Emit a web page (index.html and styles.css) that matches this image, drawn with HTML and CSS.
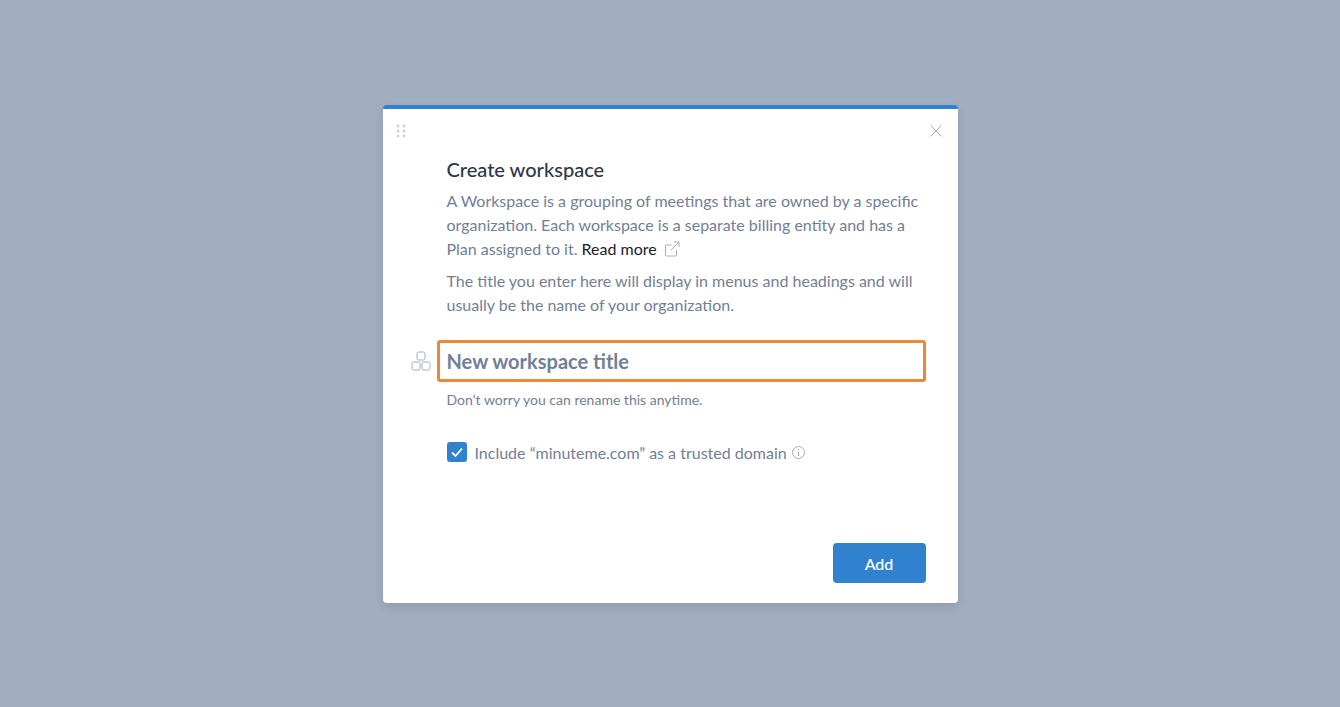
FILE: index.html
```html
<!DOCTYPE html>
<html lang="en">
<head>
<meta charset="utf-8">
<title>Create workspace</title>
<link rel="stylesheet" href="styles.css">
</head>
<body>
<div class="dialog">
  <div class="topbar">
    <svg class="grip" width="10" height="14" viewBox="0 0 10 14"><g fill="#cbd5e0"><circle cx="2" cy="2" r="1.5"/><circle cx="8" cy="2" r="1.5"/><circle cx="2" cy="7" r="1.5"/><circle cx="8" cy="7" r="1.5"/><circle cx="2" cy="12" r="1.5"/><circle cx="8" cy="12" r="1.5"/></g></svg>
    <svg class="close" width="12" height="12" viewBox="0 0 12 12"><path d="M.5.5l11 11M11.5.5l-11 11" stroke="#a0aec0" fill="none"/></svg>
  </div>
  <div class="content">
    <h1 class="title">Create workspace</h1>
    <p class="para">A Workspace is a grouping of meetings that are owned by a specific organization. Each workspace is a separate billing entity and has a Plan assigned to it. <a class="more">Read more</a><svg class="ext" width="16" height="16" viewBox="0 0 16 16"><path d="M12.5 9v5a1 1 0 0 1-1 1h-9a1 1 0 0 1-1-1V5a1 1 0 0 1 1-1h5M10 1h5v5M15 1L7 9" fill="none" stroke="#a0aec0"/></svg></p>
    <p class="para second">The title you enter here will display in menus and headings and will usually be the name of your organization.</p>
  </div>
  <div class="field-row">
    <svg class="blocks" width="20" height="20" viewBox="0 0 20 20"><g fill="none" stroke="#a0aec0"><rect x="6" y="1" width="8" height="8" rx="1.5"/><rect x="1" y="11" width="8" height="8" rx="1.5"/><rect x="11" y="11" width="8" height="8" rx="1.5"/></g></svg>
    <div class="input">New workspace title</div>
  </div>
  <p class="hint">Don’t worry you can rename this anytime.</p>
  <div class="check-row">
    <span class="checkbox"><svg width="14" height="12" viewBox="0 0 14 12"><path d="M2 6.5l3.5 3.5L12 2.5" fill="none" stroke="#fff" stroke-width="1.8"/></svg></span>
    <span class="check-label">Include “minuteme.com” as a trusted domain</span>
    <svg class="info" width="13" height="13" viewBox="0 0 13 13"><circle cx="6.5" cy="6.5" r="6" fill="none" stroke="#a0aec0"/><path d="M6.5 5.5v4.5M6.5 3v1.2" stroke="#a0aec0"/></svg>
  </div>
  <div class="footer"><button class="add">Add</button></div>
</div>
</body>
</html>
```
FILE: styles.css
```css
* { box-sizing: border-box; }
html, body { height: 100%; }
body { margin: 0; background: #a0aec0; font-family: Lato, sans-serif; display: flex; justify-content: center; padding-top: 105px; }
.dialog { width: 575px; height: 498px; background: #fff; border-top: 4px solid #3182ce; border-radius: 4px; box-shadow: 0 4px 10px rgba(0,0,0,.1); display: flex; flex-direction: column; padding: 0 32px 20px 0; }
.topbar { display: flex; justify-content: space-between; align-items: center; padding: 12px 0 0 13px; margin-right: -16px; height: 32px; }
.close { margin-right: 0; }
.content { padding-left: 64px; }
.title { margin: 12px 0 0; font-size: 20px; line-height: 32px; font-weight: 500; color: #2d3748; }
.para { margin: 4px 0 0; font-size: 16px; line-height: 24px; color: #718096; }
.second { margin-top: 8px; }
.more { color: #1a202c; }
.ext { margin-left: 7px; vertical-align: -2px; }
.field-row { display: flex; align-items: center; margin-top: 23px; padding-left: 28px; }
.blocks { margin-right: 6px; }
.input { flex: 1; height: 42px; border: 3px solid #ed8936; border-radius: 3px; padding-left: 7px; font-size: 20px; line-height: 36px; font-weight: 700; color: #718096; }
.hint { margin: 8px 0 0 64px; font-size: 14px; line-height: 20px; color: #718096; }
.check-row { display: flex; align-items: center; margin: 30px 0 0 64px; height: 24px; }
.checkbox { width: 20px; height: 20px; border-radius: 3px; background: #3182ce; display: flex; align-items: center; justify-content: center; margin-right: 8px; }
.check-label { font-size: 16px; color: #718096; }
.info { margin-left: 5px; }
.footer { margin-top: auto; display: flex; justify-content: flex-end; }
.add { width: 93px; height: 40px; border: 0; border-radius: 4px; background: #3182ce; color: #fff; font: 500 16px Lato, sans-serif; }
```
